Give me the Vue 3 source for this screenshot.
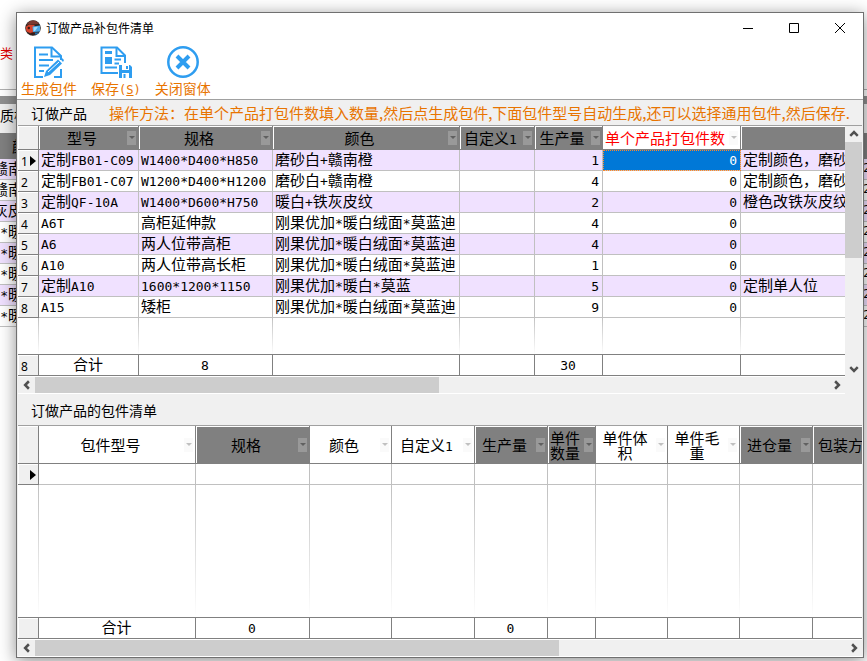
<script setup>
import { h } from 'vue'

// Splits mixed text into runs so that half-width characters use the monospace face.
const MixedText = ({ text }) =>
  h(
    'span',
    String(text)
      .split(/([\x21-\x7e]+)/)
      .filter(Boolean)
      .map((run) => (/^[\x21-\x7e]/.test(run) ? h('span', { class: 'half' }, run) : run)),
  )
MixedText.props = ['text']

const productColumns = [
  { title: '型号', dark: true, width: 100, sum: '合计' },
  { title: '规格', dark: true, width: 134, sum: '8' },
  { title: '颜色', dark: true, width: 187 },
  { title: '自定义1', dark: true, width: 75 },
  { title: '生产量', dark: true, width: 68, sum: '30', num: true },
  { title: '单个产品打包件数', red: true, width: 138, num: true },
  { title: '', dark: true },
]
const products = [
  ['定制FB01-C09', 'W1400*D400*H850', '磨砂白+赣南橙', '', '1', '0', '定制颜色，磨砂'],
  ['定制FB01-C07', 'W1200*D400*H1200', '磨砂白+赣南橙', '', '4', '0', '定制颜色，磨砂'],
  ['定制QF-10A', 'W1400*D600*H750', '暖白+铁灰皮纹', '', '2', '0', '橙色改铁灰皮纹'],
  ['A6T', '高柜延伸款', '刚果优加*暖白绒面*莫蓝迪', '', '4', '0', ''],
  ['A6', '两人位带高柜', '刚果优加*暖白绒面*莫蓝迪', '', '4', '0', ''],
  ['A10', '两人位带高长柜', '刚果优加*暖白绒面*莫蓝迪', '', '1', '0', ''],
  ['定制A10', '1600*1200*1150', '刚果优加*暖白*莫蓝', '', '5', '0', '定制单人位'],
  ['A15', '矮柜', '刚果优加*暖白绒面*莫蓝迪', '', '9', '0', ''],
]
const packageColumns = [
  { title: '包件型号', width: 157, sum: '合计' },
  { title: '规格', dark: true, width: 114, sum: '0' },
  { title: '颜色', width: 82 },
  { title: '自定义1', width: 83 },
  { title: '生产量', dark: true, width: 73, sum: '0' },
  { title: '单件数量', dark: true, width: 48 },
  { title: '单件体积', width: 72 },
  { title: '单件毛重', width: 72 },
  { title: '进仓量', dark: true, width: 73 },
  { title: '包装方', dark: true, cut: true },
]
const backdropRows = ['赣南', '赣南', '灰皮', '*暖', '*暖', '*暖', '*暖', '*暖']
</script>

<template>
  <div class="screen">
    <div class="backdrop" aria-hidden="true">
      <div class="back-top"><span>类</span></div>
      <div class="back-band"></div>
      <div class="back-label">质检</div>
      <div class="back-head"><span>颜</span></div>
      <div v-for="(t, i) in backdropRows" :key="i" class="back-row">
        <span class="back-text"><MixedText :text="t" /></span><span class="back-num half">2</span>
      </div>
    </div>

    <main class="dialog">
      <header class="titlebar">
        <svg class="logo" viewBox="0 0 16 16">
          <circle cx="8" cy="8" r="7.800" fill="#2c2624" />
          <path d="M1.500 5C3 2 5.500 .6 8.500 .6C11 .8 13 2 14 4L9 4.500L4 4Z" fill="#7a3a32" />
          <path d="M.6 7L4 4.500L9.500 5V12.500L6 13.500L1.500 11.500Z" fill="#d8432c" />
          <circle cx="3.800" cy="8" r="1.200" fill="#3a1a16" />
          <path d="M5 13L9 12L8 15.500Z" fill="#3a1a16" />
          <path d="M7.500 6.500L15 5.500V11.500L8 12Z" fill="#4aa8e8" />
          <path d="M8.500 7.300L13 6.700L10 11H8.700Z" fill="#a5dbfa" />
          <path d="M10 12.500h4l-2 2h-2Z" fill="#2a6ea8" />
        </svg>
        <h1>订做产品补包件清单</h1>
        <div class="window-buttons">
          <button type="button" aria-label="最小化"><svg viewBox="0 0 12 12"><path d="M1 6.500H11" /></svg></button>
          <button type="button" aria-label="最大化"><svg viewBox="0 0 12 12"><path d="M1.500 1.500H10.500V10.500H1.500Z" /></svg></button>
          <button type="button" aria-label="关闭"><svg viewBox="0 0 12 12"><path d="M1 1L11 11M11 1L1 11" /></svg></button>
        </div>
      </header>

      <nav class="toolbar">
        <button type="button">
          <svg viewBox="0 0 32 32">
            <path d="M10 31H2V1.500H19L28 10V14" />
            <path d="M18.500 1.500V10.500H28M6 8.500H15M6 14H20M6 19.500H16M6 25H11M21 31H28V23" />
            <path d="M11 31L13 25L25 13.500L29 17.500L17 29Z" fill="#2e9df0" stroke="none" />
            <path d="M26.500 12L28 11L31 14L30 16Z" fill="#2e9df0" stroke="none" />
            <path d="M15 26L26 16" stroke="#fff" stroke-width="1" />
          </svg>
          <span>生成包件</span>
        </button>
        <button type="button">
          <svg viewBox="0 0 32 32">
            <path d="M18 27H1.500V1.500H17L25 9.500V17" />
            <path d="M16.500 1.500V10H25M14.500 13.500H21M14.500 17.500H19M5 21.500H17" />
            <path d="M5 5H12V8H5ZM5 11H12V18H5Z" fill="#2e9df0" stroke="none" />
            <path d="M19 19H30L32 21V32H19Z" fill="#2e9df0" stroke="none" />
            <path d="M22 19H29V24H22ZM22 27H29V32H22Z" fill="#fff" stroke="none" />
            <path d="M27 20V23M24.500 28V32" stroke-width="2" />
          </svg>
          <span>保存<span class="half">(<u>S</u>)</span></span>
        </button>
        <button type="button">
          <svg viewBox="0 0 32 32">
            <circle cx="16" cy="16" r="14.700" stroke-width="2.500" />
            <path d="M10 10L22 22M22 10L10 22" stroke-width="4" />
          </svg>
          <span>关闭窗体</span>
        </button>
      </nav>

      <section>
        <div class="caption">
          <h2>订做产品</h2>
          <p>操作方法：在单个产品打包件数填入数量,然后点生成包件,下面包件型号自动生成,还可以选择通用包件,然后保存.</p>
        </div>
        <div class="grid-area">
          <div class="grid-main">
            <table>
              <colgroup>
                <col class="marker" />
                <col v-for="(c, i) in productColumns" :key="i" :style="{ width: c.width ? c.width + 'px' : 'auto' }" />
              </colgroup>
              <thead>
                <tr class="head">
                  <th class="row-head"></th>
                  <th v-for="(c, i) in productColumns" :key="i" :class="{ dark: c.dark, red: c.red }">
                    <div class="th-box">
                      <span class="th-text"><MixedText :text="c.title" /></span>
                      <button v-if="c.title" type="button" class="filter" :aria-label="c.title"></button>
                    </div>
                  </th>
                </tr>
              </thead>
              <tbody>
                <tr v-for="(row, r) in products" :key="r" :class="{ tinted: r % 2 === 0 }">
                  <th class="row-head"><div class="marker-box">{{ r + 1 }}<i v-if="r === 0" class="pointer"></i></div></th>
                  <td v-for="(v, i) in row" :key="i" :class="{ num: productColumns[i].num, selected: r === 0 && i === 5 }">
                    <MixedText :text="v" />
                  </td>
                </tr>
                <tr class="filler short"><th></th><td v-for="(c, i) in productColumns" :key="i"></td></tr>
              </tbody>
              <tfoot>
                <tr>
                  <th class="row-head"><div class="marker-box">8</div></th>
                  <td v-for="(c, i) in productColumns" :key="i"><MixedText :text="c.sum || ''" /></td>
                </tr>
              </tfoot>
            </table>
            <div class="scroll horizontal">
              <button type="button" aria-label="向左"><svg viewBox="0 0 8 8"><path d="M5.500 1L2.500 4L5.500 7" /></svg></button>
              <div class="track"><div class="thumb" :style="{ width: '51%' }"></div></div>
              <button type="button" aria-label="向右"><svg viewBox="0 0 8 8"><path d="M2.500 1L5.500 4L2.500 7" /></svg></button>
            </div>
          </div>
          <div class="scroll vertical">
            <button type="button" aria-label="向上"><svg viewBox="0 0 8 8"><path d="M1 5.500L4 2.500L7 5.500" /></svg></button>
            <div class="track"><div class="thumb" :style="{ height: '53%' }"></div></div>
            <button type="button" aria-label="向下"><svg viewBox="0 0 8 8"><path d="M1 2.500L4 5.500L7 2.500" /></svg></button>
          </div>
        </div>
      </section>

      <section>
        <div class="caption tall"><h2>订做产品的包件清单</h2></div>
        <div class="grid-area">
          <div class="grid-main">
            <table>
              <colgroup>
                <col class="marker" />
                <col v-for="(c, i) in packageColumns" :key="i" :style="{ width: c.width ? c.width + 'px' : 'auto' }" />
              </colgroup>
              <thead>
                <tr class="head tall">
                  <th class="row-head"></th>
                  <th v-for="(c, i) in packageColumns" :key="i" :class="{ dark: c.dark, cut: c.cut }">
                    <div class="th-box">
                      <span class="th-text"><MixedText :text="c.title" /></span>
                      <button v-if="!c.cut" type="button" class="filter" :aria-label="c.title"></button>
                    </div>
                  </th>
                </tr>
              </thead>
              <tbody>
                <tr>
                  <th class="row-head"><div class="marker-box"><i class="pointer"></i></div></th>
                  <td v-for="(c, i) in packageColumns" :key="i"></td>
                </tr>
                <tr class="filler"><th></th><td v-for="(c, i) in packageColumns" :key="i"></td></tr>
              </tbody>
              <tfoot>
                <tr>
                  <th class="row-head"></th>
                  <td v-for="(c, i) in packageColumns" :key="i"><MixedText :text="c.sum || ''" /></td>
                </tr>
              </tfoot>
            </table>
            <div class="scroll horizontal">
              <button type="button" aria-label="向左"><svg viewBox="0 0 8 8"><path d="M5.500 1L2.500 4L5.500 7" /></svg></button>
              <div class="track"><div class="thumb" :style="{ width: '64.7%' }"></div></div>
              <button type="button" aria-label="向右"><svg viewBox="0 0 8 8"><path d="M2.500 1L5.500 4L2.500 7" /></svg></button>
            </div>
          </div>
        </div>
      </section>
    </main>
  </div>
</template>

<style>
body {
  background: #fff;
  overflow: hidden;
}
.half {
  font-family: "DejaVu Sans Mono", "Liberation Mono", monospace;
  font-size: 13px;
  line-height: 12px;
}
</style>

<style scoped>
.screen {
  display: grid;
  grid-template-columns: minmax(0, 1fr);
  min-height: 100vh;
  font-family: "Noto Sans CJK SC", sans-serif;
  font-size: 15px;
  color: #000;
  overflow: hidden;
}
.backdrop,
.dialog {
  grid-area: 1 / 1;
}
button {
  border: 0;
  margin: 0;
  padding: 0;
  background: none;
  font: inherit;
  color: inherit;
}
h1,
h2,
p {
  margin: 0;
  font-weight: 400;
}

.backdrop {
  overflow: hidden;
  white-space: nowrap;
}
.back-top {
  box-sizing: border-box;
  height: 90px;
  padding-top: 43px;
  border-bottom: 1px solid #b0b0b0;
  font-size: 13px;
  line-height: 20px;
  color: #e00000;
}
.back-band {
  height: 8px;
  margin-top: 6px;
  background: #909090;
}
.back-label {
  height: 29px;
  line-height: 22px;
  font-size: 14px;
  background: #f0f0f0;
}
.back-head {
  height: 26px;
  padding-left: 12px;
  line-height: 26px;
  background: #808080;
}
.back-row {
  box-sizing: border-box;
  display: flex;
  justify-content: space-between;
  height: 21px;
  line-height: 17px;
  border-bottom: 1px solid #c0c0c0;
}
.back-row:nth-child(odd) {
  background: #f0e1ff;
}
.back-text {
  display: flex;
  justify-content: flex-end;
  width: 23px;
}
.back-num {
  width: 4px;
  line-height: 17px;
}

.dialog {
  align-self: start;
  margin: 12px 3px 3px 16px;
  border: 1px solid #707070;
  background: #fff;
  box-shadow: 0 3px 16px rgba(0, 0, 0, 0.45);
}
.titlebar {
  display: flex;
  align-items: center;
  height: 30px;
  padding-left: 8px;
}
.logo {
  flex: none;
  width: 16px;
  height: 16px;
  margin-right: 5px;
}
h1 {
  font-size: 12px;
  line-height: 16px;
}
.window-buttons {
  display: flex;
  margin-left: auto;
}
.window-buttons button {
  display: flex;
  align-items: center;
  justify-content: center;
  width: 46px;
  height: 29px;
}
.window-buttons svg {
  width: 12px;
  height: 12px;
  fill: none;
  stroke: #000;
}
.toolbar {
  display: flex;
  gap: 14px;
  height: 53px;
  padding: 3px 4px 0;
  border-bottom: 1px solid #a0a0a0;
}
.toolbar button {
  display: flex;
  flex-direction: column;
  align-items: center;
  font-size: 14px;
  line-height: 21px;
  color: #e87400;
}
.toolbar .half {
  font-size: 12px;
}
.toolbar svg {
  flex: none;
  width: 32px;
  height: 32px;
  fill: none;
  stroke: #2e9df0;
  stroke-width: 2;
}

section {
  padding: 0 1px;
  background: #f0f0f0;
}
.caption {
  display: flex;
  align-items: center;
  height: 25px;
  padding-left: 13px;
  border-bottom: 1px solid #a0a0a0;
  white-space: nowrap;
  overflow: hidden;
}
.caption.tall {
  height: 31px;
}
.caption h2 {
  font-size: 14px;
  line-height: 20px;
}
.caption p {
  margin-left: 22px;
  line-height: 20px;
  color: #e87400;
}
.grid-area {
  display: flex;
}
.grid-main {
  flex: 1;
  min-width: 0;
}

table {
  width: 100%;
  table-layout: fixed;
  border-collapse: separate;
  border-spacing: 0;
  background: #fff;
}
col.marker {
  width: 21px;
}
th,
td {
  box-sizing: border-box;
  height: 21px;
  padding: 0 3px 0 2px;
  border-right: 1px solid #c0c0c0;
  border-bottom: 1px solid #c0c0c0;
  font-weight: 400;
  line-height: 17px;
  text-align: left;
  white-space: nowrap;
  overflow: hidden;
}
tr > :last-child {
  border-right: 0;
}
td {
  vertical-align: top;
}
.tinted td {
  background: #f0e1ff;
}
.num {
  text-align: right;
}
.tinted td.selected {
  background: #0078d7;
  color: #fff;
  outline: 1px dotted #ff8728;
  outline-offset: -1px;
}
.head th {
  height: 24px;
  padding: 0;
  border-color: #808080;
  line-height: 15px;
  white-space: normal;
}
.head.tall th {
  height: 38px;
}
.head th.dark {
  background: #808080;
  box-shadow: inset 1px 1px 0 #fff;
}
.head th.red {
  color: #f00;
}
.th-box {
  display: flex;
  align-items: center;
}
.th-text {
  flex: 1;
  text-align: center;
}
.cut .th-text {
  padding-left: 5px;
  text-align: left;
  white-space: nowrap;
}
.filter {
  flex: none;
  display: flex;
  align-items: center;
  justify-content: center;
  width: 9px;
  height: 14px;
  margin: 0 2px;
  background: #fafafa;
}
.filter::before {
  content: "";
  border: 3px solid transparent;
  border-top-color: #c0c0c0;
  border-bottom: 0;
}
.dark .filter {
  background: #999;
}
.dark .filter::before {
  border-top-color: #606060;
}
th.row-head {
  padding: 0;
  background: #f0f0f0;
  border-color: #808080;
  box-shadow: inset 1px 1px 0 #fff;
}
.marker-box {
  display: flex;
  align-items: center;
  height: 18px;
  padding: 2px 2px 0 3px;
  box-sizing: border-box;
  font-family: "Noto Sans", sans-serif;
  font-size: 12px;
}
.pointer {
  margin-left: auto;
  border: 5px solid transparent;
  border-left: 6px solid #000;
  border-right: 0;
}
.filler > * {
  height: 132px;
  border-bottom: 0;
  border-right: 1px solid;
  border-image: linear-gradient(#c0c0c0, #fff) 1;
}
.filler.short > * {
  height: 36px;
}
.filler > :last-child {
  border-image: none;
  border-right: 0;
}
tfoot th,
tfoot td {
  height: 22px;
  border-top: 1px solid #808080;
  border-color: #808080;
  text-align: center;
}

.scroll {
  display: flex;
  background: #f0f0f0;
}
.scroll button {
  flex: none;
  display: flex;
  align-items: center;
  justify-content: center;
  width: 17px;
  height: 16px;
}
.scroll svg {
  width: 10px;
  height: 10px;
  fill: none;
  stroke: #505050;
  stroke-width: 2;
}
.track {
  flex: 1;
}
.thumb {
  height: 100%;
  background: #cdcdcd;
}
.horizontal {
  height: 16px;
  border-top: 1px solid #fff;
  border-bottom: 1px solid #fff;
}
.vertical {
  flex-direction: column;
  width: 17px;
  padding-bottom: 17px;
}
</style>
